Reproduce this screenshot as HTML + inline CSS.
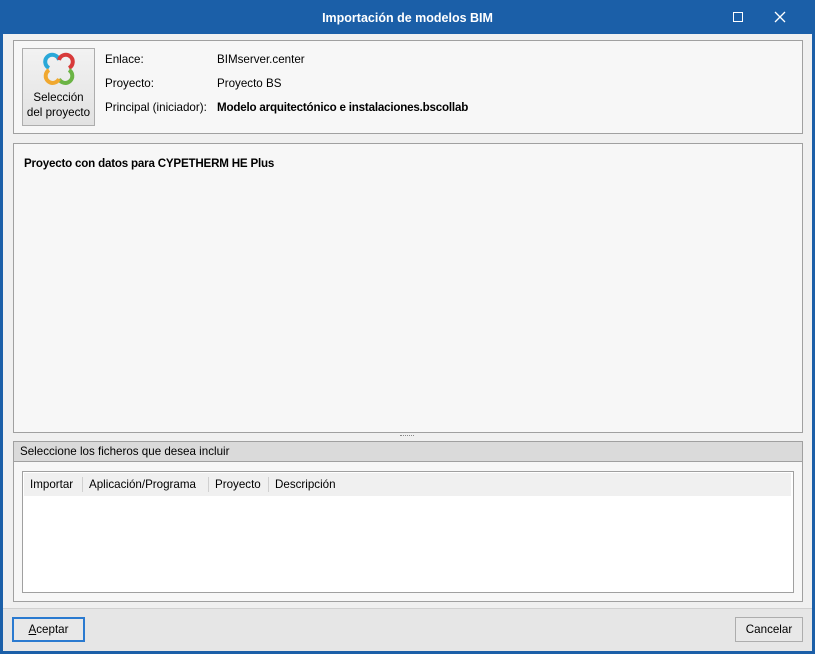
<!DOCTYPE html><html><head><style>
*{margin:0;padding:0;box-sizing:border-box}
body{width:815px;height:654px;background:#1b5fa8;font-family:"Liberation Sans",sans-serif;font-size:11.6px;color:#000;position:relative;overflow:hidden}
.a{position:absolute}
.title{left:0;top:0;width:815px;height:34px;color:#fff;font-weight:bold;font-size:12.5px;text-align:center;line-height:36px}
.client{left:3px;top:34px;width:809px;height:617px;background:#f0f0f0}
.panel{background:#f7f7f7;border:1px solid #a0a0a0}
.btn{background:#e8e8e8;border:1px solid #adadad;text-align:center}
</style></head><body>
<div class="a title">Importación de modelos BIM</div>
<div class="a" style="left:733px;top:12px;width:10px;height:10px;border:1px solid #fff"></div>
<svg class="a" style="left:774px;top:11px" width="12" height="12"><path d="M1 1L11 11M11 1L1 11" stroke="#fff" stroke-width="1.3"/></svg>
<div class="a client"></div>
<div class="a" style="left:3px;top:608px;width:809px;height:43px;background:#e6e6e6;border-top:1px solid #d0d0d0"></div>
<div class="a panel" style="left:13px;top:40px;width:790px;height:94px"></div>
<div class="a btn" style="left:22px;top:48px;width:73px;height:78px;background:linear-gradient(#f2f2f2,#e2e2e2)">
<svg style="margin-top:3px" width="36" height="34" viewBox="0 0 36 34">
<path d="M8 16 A7 7 0 1 1 18 8" stroke="#2aa8d8" stroke-width="4" fill="none"/>
<path d="M18 8 A7 7 0 1 1 28 16" stroke="#d83a3a" stroke-width="4" fill="none"/>
<path d="M28 18 A7 7 0 1 1 18 27" stroke="#6bb445" stroke-width="4" fill="none"/>
<path d="M18 27 A7 7 0 1 1 8 18" stroke="#f0a830" stroke-width="4" fill="none"/>
</svg>
<div style="line-height:15px;margin-top:1px">Selección<br>del proyecto</div></div>
<div class="a" style="left:105px;top:53px">Enlace:</div>
<div class="a" style="left:217px;top:53px">BIMserver.center</div>
<div class="a" style="left:105px;top:77px">Proyecto:</div>
<div class="a" style="left:217px;top:77px">Proyecto BS</div>
<div class="a" style="left:105px;top:101px">Principal (iniciador):</div>
<div class="a" style="left:217px;top:101px;font-weight:bold;letter-spacing:-0.2px">Modelo arquitectónico e instalaciones.bscollab</div>
<div class="a panel" style="left:13px;top:143px;width:790px;height:290px"></div>
<div class="a" style="left:24px;top:157px;font-weight:bold;letter-spacing:-0.2px">Proyecto con datos para CYPETHERM HE Plus</div>
<div class="a" style="left:400px;top:435px;width:14px;border-top:1px dotted #888"></div>
<div class="a panel" style="left:13px;top:441px;width:790px;height:161px"></div>
<div class="a" style="left:14px;top:442px;width:788px;height:20px;background:#dadada;border-bottom:1px solid #a0a0a0;padding-left:6px;line-height:19px">Seleccione los ficheros que desea incluir</div>
<div class="a" style="left:22px;top:471px;width:772px;height:122px;background:#fff;border:1px solid #a0a0a0"></div>
<div class="a" style="left:24px;top:473px;width:767px;height:23px;background:#f0f0f0;line-height:23px">
<span class="a" style="left:6px">Importar</span><span class="a" style="left:58px;top:4px;height:15px;border-left:1px solid #d0d0d0"></span>
<span class="a" style="left:65px">Aplicación/Programa</span><span class="a" style="left:184px;top:4px;height:15px;border-left:1px solid #d0d0d0"></span>
<span class="a" style="left:191px">Proyecto</span><span class="a" style="left:244px;top:4px;height:15px;border-left:1px solid #d0d0d0"></span>
<span class="a" style="left:251px">Descripción</span></div>
<div class="a btn" style="left:12px;top:617px;width:73px;height:25px;border:2px solid #2a7ad0;line-height:21px"><u>A</u>ceptar</div>
<div class="a btn" style="left:735px;top:617px;width:68px;height:25px;line-height:23px">Cancelar</div>
</body></html>
